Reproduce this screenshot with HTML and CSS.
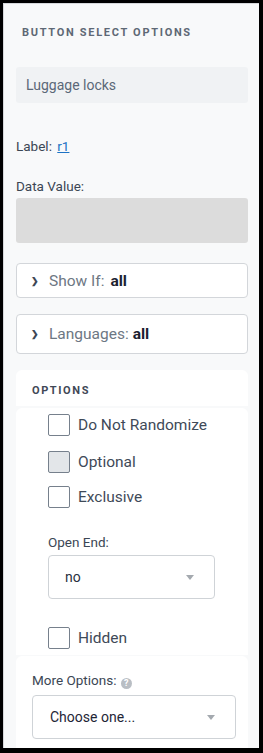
FILE: index.html
```html
<!DOCTYPE html>
<html lang="en">
<head>
    <meta charset="UTF-8">
    <meta name="viewport" content="width=device-width, initial-scale=1.0">
    <title>Button Select Options</title>
    <link rel="stylesheet" href="styles.css">
</head>
<body>
    <div id="sidebar">
        <div class="section-title">BUTTON SELECT OPTIONS</div>

        <div class="text-input">Luggage locks</div>

        <div class="field-row">Label: <a href="#" class="link">r1</a></div>

        <div class="field-label">Data Value:</div>
        <div class="data-box"></div>

        <div class="toggle-box show-if">
            <span class="chevron">&#10095;</span>
            <span class="toggle-name">Show If:</span>
            <span class="toggle-value">all</span>
        </div>

        <div class="toggle-box languages">
            <span class="chevron">&#10095;</span>
            <span class="toggle-name">Languages:</span>
            <span class="toggle-value">all</span>
        </div>

        <div class="options-card">
            <div class="options-head">OPTIONS</div>
            <div class="options-body">
                <label class="check-row"><span class="checkbox"></span>Do Not Randomize</label>
                <label class="check-row"><span class="checkbox filled"></span>Optional</label>
                <label class="check-row"><span class="checkbox"></span>Exclusive</label>

                <div class="field-label open-end">Open End:</div>
                <div class="select small-select">
                    <span>no</span>
                    <span class="caret"></span>
                </div>

                <label class="check-row hidden-row"><span class="checkbox"></span>Hidden</label>
            </div>
            <div class="options-more">
                <div class="field-label">More Options: <span class="help">?</span></div>
                <div class="select wide-select">
                    <span>Choose one...</span>
                    <span class="caret"></span>
                </div>
            </div>
        </div>
    </div>
</body>
</html>
```

FILE: styles.css
```css
body {
    margin: 0;
    padding: 0;
    font-family: Roboto, "Liberation Sans", Arial, sans-serif;
    background-color: #ffffff;
}

#sidebar {
    width: 263px;
    height: 753px;
    box-sizing: border-box;
    border: 3px solid #000000;
    border-right-width: 4px;
    border-bottom-width: 5px;
    background-color: #f8f9fa;
    padding: 0 11px 0 13px;
    overflow: hidden;
    box-shadow: inset 1px 1px 0 #d6d8db;
}

.section-title {
    font-size: 11px;
    font-weight: bold;
    letter-spacing: 1.7px;
    color: #5e6875;
    padding: 23px 0 0 6px;
    line-height: 13px;
}

.text-input {
    margin-top: 28px;
    height: 36px;
    line-height: 36px;
    background-color: #f0f2f4;
    border-radius: 3px;
    padding-left: 10px;
    font-size: 14px;
    color: #5b6878;
}

.field-row {
    margin-top: 35px;
    font-size: 13.5px;
    color: #3b4654;
    line-height: 16px;
}

.link {
    color: #1d72c4;
    margin-left: 2px;
}

.field-label {
    font-size: 13.5px;
    color: #3b4654;
    line-height: 16px;
}

.field-row + .field-label {
    margin-top: 24px;
}

.data-box {
    margin-top: 4px;
    height: 45px;
    background-color: #dcdcdc;
    border-radius: 3px;
}

.toggle-box {
    display: flex;
    align-items: center;
    background-color: #ffffff;
    border: 1px solid #d3d6da;
    border-radius: 4px;
    box-sizing: border-box;
    padding-left: 14px;
    font-size: 15.5px;
}

.show-if {
    margin-top: 20px;
    height: 35px;
}

.languages {
    margin-top: 16px;
    height: 40px;
}

.chevron {
    font-size: 9px;
    font-weight: bold;
    color: #3d4654;
    width: 18px;
}

.toggle-name {
    color: #6d7783;
}

.toggle-value {
    font-weight: bold;
    color: #1b2130;
    margin-left: 6px;
}

.languages .toggle-value {
    margin-left: 4px;
}

.options-card {
    margin-top: 16px;
}

.options-head {
    background-color: #ffffff;
    border-radius: 6px 6px 0 0;
    padding: 14px 0 0 16px;
    height: 22px;
    font-size: 11px;
    font-weight: bold;
    letter-spacing: 1.6px;
    color: #3f4856;
    line-height: 13px;
}

.options-body {
    margin-top: 2px;
    background-color: #ffffff;
    border-radius: 6px 6px 0 0;
    padding: 6px 0 6px 32px;
}

.check-row {
    display: flex;
    align-items: center;
    font-size: 15.5px;
    color: #3f4a58;
    height: 22px;
    margin-bottom: 15px;
}

.check-row:nth-child(2) {
    margin-bottom: 13px;
}

.checkbox {
    width: 20px;
    height: 20px;
    border: 1px solid #76808c;
    border-radius: 2px;
    margin-right: 8px;
    background-color: #ffffff;
}

.checkbox.filled {
    background-color: #e3e6e9;
}

.open-end {
    margin-top: 26px;
}

.select {
    display: flex;
    align-items: center;
    justify-content: space-between;
    box-sizing: border-box;
    background-color: #ffffff;
    border: 1px solid #cfd3d7;
    border-radius: 4px;
    height: 44px;
    font-size: 14px;
    color: #2a3140;
}

.small-select {
    margin-top: 5px;
    width: 167px;
    padding: 0 20px 0 16px;
}

.hidden-row {
    margin-top: 28px;
    margin-bottom: 0;
}

.caret {
    width: 0;
    height: 0;
    border-left: 4px solid transparent;
    border-right: 4px solid transparent;
    border-top: 5px solid #a4a9af;
}

.options-more {
    margin-top: 1px;
    background-color: #ffffff;
    border-radius: 6px 6px 0 0;
    padding: 16px 12px 20px 16px;
}

.help {
    display: inline-block;
    width: 11px;
    height: 11px;
    border-radius: 50%;
    background-color: #b9bec4;
    color: #ffffff;
    font-size: 9px;
    font-weight: bold;
    text-align: center;
    line-height: 11px;
    vertical-align: -1px;
    margin-left: 1px;
}

.wide-select {
    margin-top: 6px;
    width: 204px;
    padding: 0 20px 0 17px;
    color: #1e2536;
}
```
